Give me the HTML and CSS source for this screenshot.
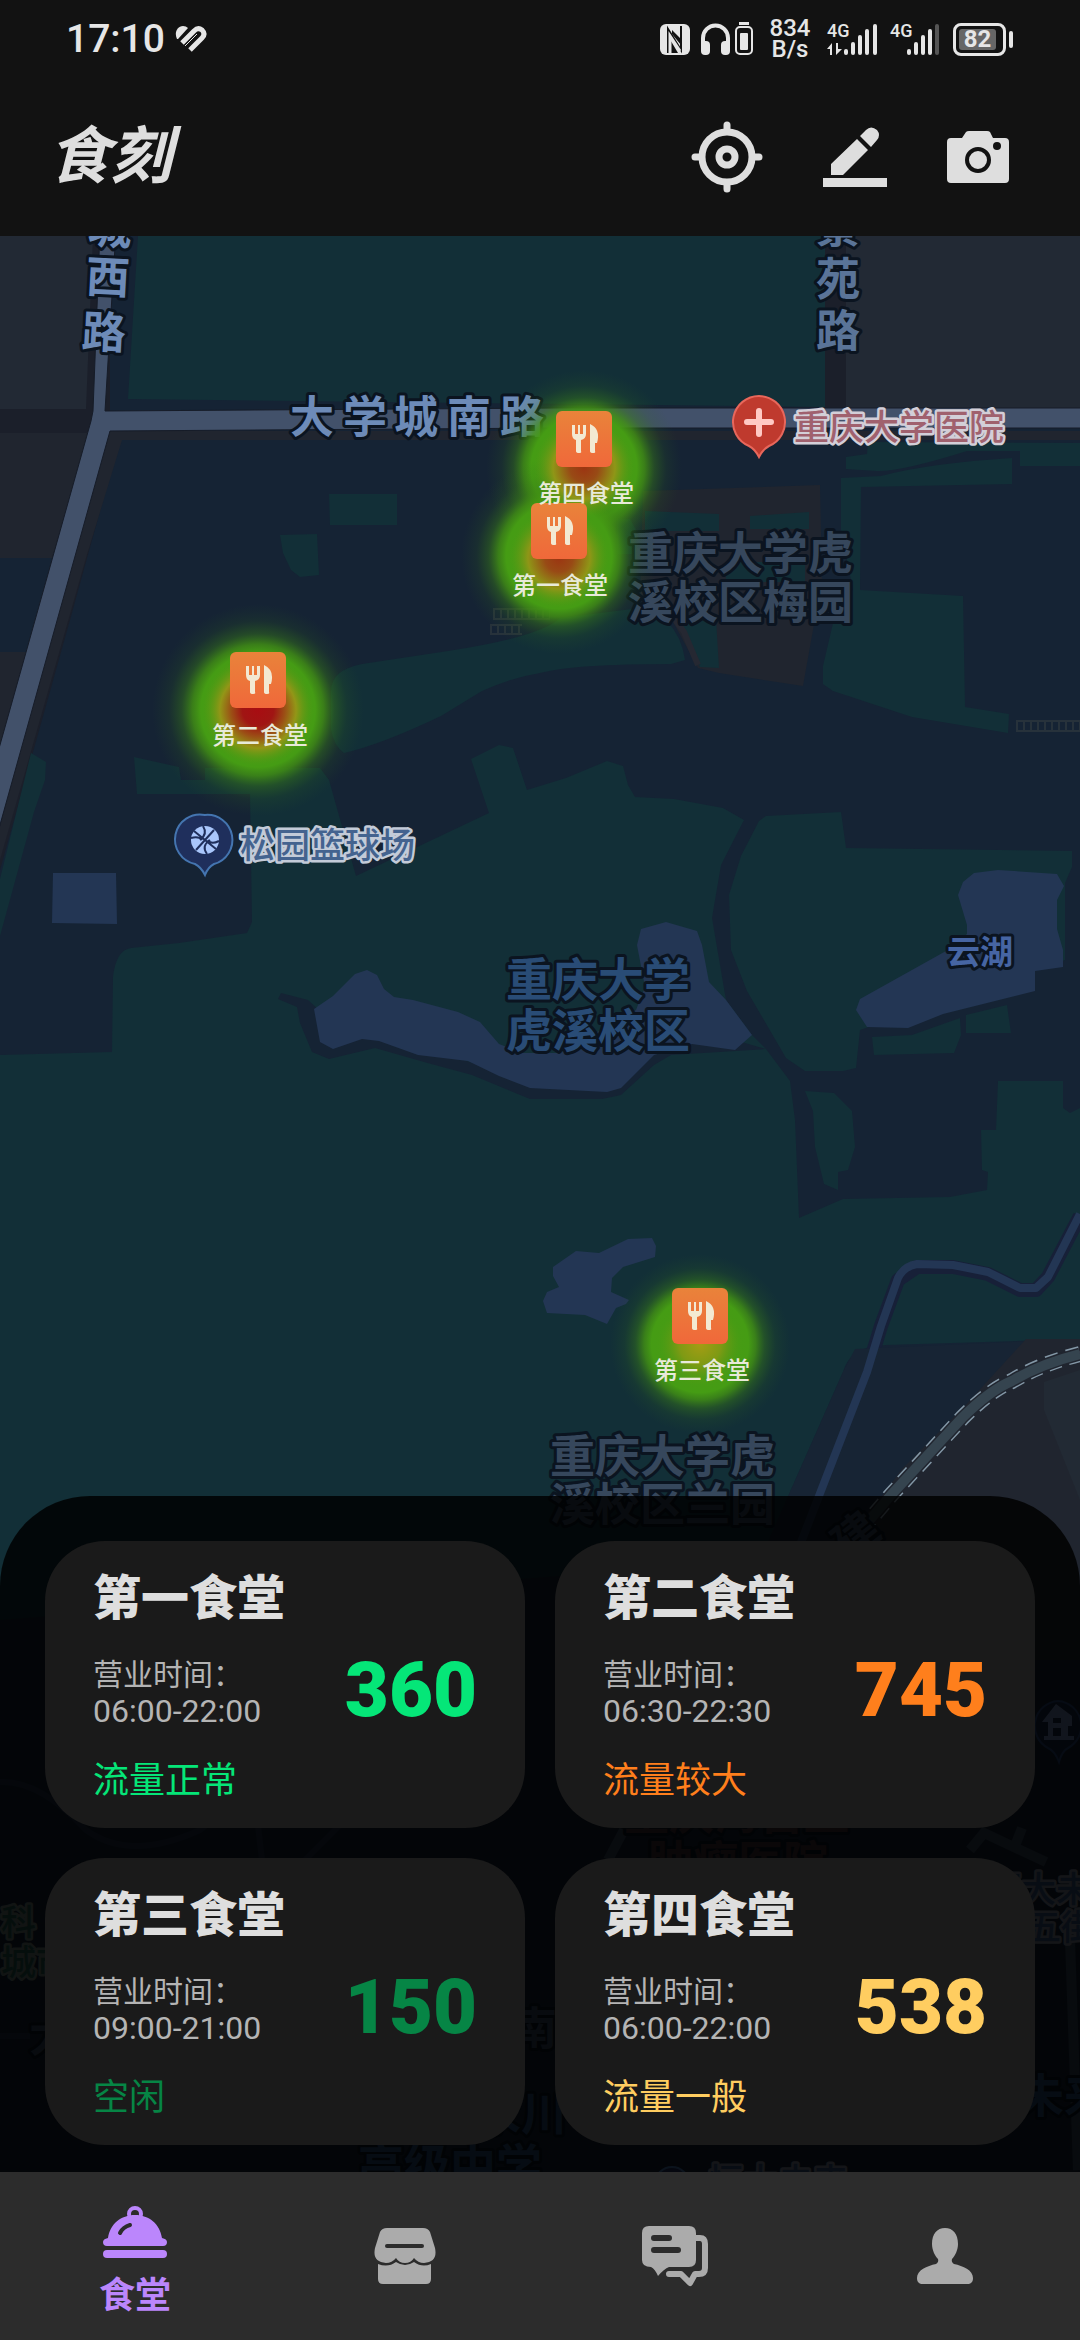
FILE: index.html
```html
<!DOCTYPE html>
<html lang="zh-CN">
<head>
<meta charset="utf-8">
<meta name="viewport" content="width=device-width, initial-scale=1">
<title>食刻</title>
<link rel="stylesheet" href="styles.css">
</head>
<body>
<div class="app">
  <div class="status">
    <div class="status-left">
      <span class="clock">17:10</span>
      <svg class="heart" width="32" height="27" viewBox="0 0 32 27" fill="none" aria-hidden="true">
        <path d="M2 13C-1 7 2 0 8 0Q11 0 13 2L3 13Z" fill="#e6e6e6"/>
        <path d="M7 17L19 5Q23 1 27 4Q31 8 27 12L15 24" stroke="#e6e6e6" stroke-width="5"/>
        <path d="M10 20L22 8" stroke="#e6e6e6" stroke-width="1"/>
      </svg>
    </div>
    <div class="status-right">
      <svg width="93" height="34" viewBox="0 0 93 34" fill="none" aria-hidden="true">
        <rect x="0" y="2" width="30" height="31" rx="6" fill="#e6e6e6"/>
        <path d="M8 31V7L21 28V4" stroke="#121212" stroke-width="2"/>
        <path d="M12 8L21 17V23L12 12ZM8 14V31L18 31" fill="#121212"/>
        <path d="M10 32V14L20 29" stroke="#e6e6e6" stroke-width="3"/>
        <path d="M43 25V16A12.500 12.500 0 0 1 68 16V25" stroke="#e6e6e6" stroke-width="4"/>
        <rect x="41" y="19" width="9" height="14" rx="4" fill="#e6e6e6"/>
        <rect x="61" y="19" width="9" height="14" rx="4" fill="#e6e6e6"/>
        <rect x="79" y="0" width="10" height="3" fill="#e6e6e6"/>
        <rect x="76" y="5" width="16" height="27" rx="4" stroke="#e6e6e6" stroke-width="2"/>
        <rect x="80" y="11" width="8" height="17" rx="1" fill="#e6e6e6"/>
      </svg>
      <div class="speed"><span>834</span><span>B/s</span></div>
      <div class="signal">
        <span class="net">4G</span>
        <svg width="51" height="34" viewBox="0 0 51 34" fill="#e6e6e6" aria-hidden="true">
          <path d="M0 27L5 21V33H3V27ZM9 21V33L15 27H11V21Z"/>
          <rect x="17" y="27" width="4" height="6" rx="2"/><rect x="24" y="20" width="4" height="13" rx="2"/><rect x="31" y="13" width="4" height="20" rx="2"/><rect x="38" y="7" width="4" height="26" rx="2"/><rect x="46" y="2" width="4" height="31" rx="2"/>
        </svg>
      </div>
      <div class="signal">
        <span class="net">4G</span>
        <svg width="51" height="34" viewBox="0 0 51 34" fill="#e6e6e6" aria-hidden="true">
          <rect x="17" y="27" width="4" height="6" rx="2"/><rect x="24" y="20" width="4" height="13" rx="2"/><rect x="31" y="13" width="4" height="20" rx="2"/><rect x="38" y="7" width="4" height="26" rx="2"/><rect x="45" y="2" width="4" height="31" rx="2" fill="#555"/>
        </svg>
      </div>
      <div class="battery"><span>82</span></div>
    </div>
  </div>

  <header class="topbar">
    <h1 class="brand">食刻</h1>
    <div class="tools">
      <button type="button" aria-label="定位">
        <svg width="72" height="72" viewBox="0 0 72 72" fill="none" stroke="#dedede" stroke-width="7">
          <circle cx="36" cy="36" r="25"/><circle cx="36" cy="36" r="8"/>
          <path d="M36 4V10M36 62V68M4 36H10M62 36H68" stroke-linecap="round"/>
        </svg>
      </button>
      <button type="button" aria-label="编辑">
        <svg width="64" height="60" viewBox="0 0 64 60" fill="#dedede">
          <path d="M0 51H64V60H0ZM8 48V37L34 12L45 23L20 48ZM37 9L43 3Q48-2 54 3Q58 8 54 13L48 20Z"/>
        </svg>
      </button>
      <button type="button" aria-label="拍照">
        <svg width="62" height="54" viewBox="0 0 62 54" fill="#dedede">
          <path d="M4 8H15L19 2Q20 1 22 1H40Q42 1 43 2L46 8H58Q62 8 62 12V49Q62 53 58 53H4Q0 53 0 49V12Q0 8 4 8Z"/>
          <circle cx="31" cy="30" r="11" stroke="#121212" stroke-width="4"/><circle cx="50" cy="16" r="4" fill="#121212"/>
        </svg>
      </button>
    </div>
  </header>

  <main class="stage">
    <svg class="map" viewBox="0 236 1080 1936" preserveAspectRatio="xMidYMin slice" role="img" aria-label="校园食堂地图">
      <defs>
        <radialGradient id="glow"><stop offset="0" stop-color="#4b9b14"/><stop offset=".54" stop-color="#459c14"/><stop offset=".62" stop-color="#429213" stop-opacity=".82"/><stop offset=".72" stop-color="#3a8016" stop-opacity=".42"/><stop offset=".84" stop-color="#347318" stop-opacity=".14"/><stop offset="1" stop-color="#2c6020" stop-opacity="0"/></radialGradient>
        <radialGradient id="core-high"><stop offset="0" stop-color="#a80d12"/><stop offset=".28" stop-color="#a01513"/><stop offset=".48" stop-color="#9b5015"/><stop offset=".68" stop-color="#939617"/><stop offset="1" stop-color="#4b9b14" stop-opacity="0"/></radialGradient>
        <radialGradient id="core-mid"><stop offset="0" stop-color="#9c3512"/><stop offset=".28" stop-color="#984a15"/><stop offset=".62" stop-color="#8f9617"/><stop offset="1" stop-color="#4b9b14" stop-opacity="0"/></radialGradient>
        <radialGradient id="core-low"><stop offset="0" stop-color="#a59c14"/><stop offset=".5" stop-color="#7e9a14"/><stop offset="1" stop-color="#4b9b14" stop-opacity="0"/></radialGradient>
        <linearGradient id="pin" x2="0" y2="1"><stop offset="0" stop-color="#e9833a"/><stop offset="1" stop-color="#f0683a"/></linearGradient>
        <g id="canteen">
          <rect x="-28" y="0" width="56" height="56" rx="6"/>
          <path d="M-12 14V23Q-12 28-8 29V40Q-8 42-5 42T-3 40V29Q2 28 2 23V14H-1V23H-4V14H-6V23H-9V14ZM6 13V40Q6 42 9 42T11 40V32H13Q17 18 6 13Z" fill="#f3e9d2"/>
        </g>
      </defs>

      <rect y="236" width="1080" height="1936" fill="#152334"/>
      <!-- city blocks -->
      <path fill="#1b1f2a" d="M0 236H110V411L85 440H0ZM825 236H846V408H825ZM0 431H122L70 620L0 870V760L60 558H0Z"/>
      <path fill="#222934" d="M0 236H93L86 409H0ZM846 236H1080V408H846Z"/>
      <path fill="#20252f" d="M0 433H90L52 558H0ZM0 652H28L0 752ZM104 431H1080V440H122L86 558L20 790L0 860V826ZM643 491L820 485L822 580L813 630L803 686L719 673L698 668L672 620L640 600Z"/>
      <!-- greens -->
      <g fill="#122f37">
        <path d="M138 236H825V407L128 399ZM329 494H397V525H330ZM280 535L317 534L319 575L300 577L291 570L283 553Z"/>
        <path d="M560 618Q540 637 448 651L362 664Q331 670 331 691V730Q334 746 344 753Q380 745 441 716L482 691Q510 678 540 673Q574 664 671 664L685 660Q682 637 667 621L640 608Z"/>
        <path d="M678 623L716 619L719 668L700 667L690 641ZM645 511L719 514V531H645ZM750 516L809 512V529H750ZM726 562H805V582H726ZM617 519H630L636 530V554H617Z"/>
        <path d="M846 457L867 454L868 442L1080 443V466H1020V451H967Q900 472 877 471L846 469Z"/>
        <path d="M841 478L881 476Q930 463 1012 458V484L861 487L860 590L963 596L965 707L1009 714L1008 733L912 717L833 691L823 684V666L834 619L838 598L853 590L841 530Z"/>
        <path d="M31 753L46 762L45 780L34 812L0 936V879Z"/>
        <path d="M0 1055L112 1052L113 977Q116 950 131 948L179 943L247 933L252 922L250 794H137L134 757L179 767L181 780H205V768H320L329 780L356 876L489 813L471 759L499 745L513 748L527 790L566 778L607 761L623 766L628 785L635 797L674 799L723 808L744 820L721 865L712 918L726 1000L752 1035L766 1049L790 1081L795 1120L799 1218L843 1199L950 1197L987 1190L988 1172L982 1170L981 1130H996L998 1081H1063V1108L1070 1113L1080 1108V1339L886 1345Q850 1346 843 1372L760 1560L0 1620Z"/>
        <path d="M766 816L841 812L846 848L1072 851V867L1065 883V960L860 1030L856 1068L843 1071H805L786 1058L747 991L731 950L729 895L741 856L759 821Z"/>
        <path d="M872 1037L912 1035L960 1018L961 1035L954 1053L874 1055ZM966 1015L1007 1005L1011 1033H966ZM805 1091L834 1093L852 1111L855 1147L848 1170L838 1172V1190L824 1184L815 1147L813 1111Z"/>
      </g>
      <path fill="none" stroke="#252832" stroke-width="6" d="M668 610L684 632L698 665"/>
      <path fill="none" stroke="#27323b" stroke-width="2" d="M493 609H550M493 619H550M490 625H522M490 634H522M1016 721H1080M1016 731H1080"/>
      <path fill="none" stroke="#27323b" stroke-width="10" stroke-dasharray="2 5" d="M493 614H550M490 630H523M1016 726H1080"/>
      <!-- shore and water -->
      <path fill="#152334" d="M281 993L308 1000L330 1020L530 1080L640 1030L700 1030L766 1049L671 1055L654 1065L621 1095L602 1099H530L472 1075L424 1062L375 1048L329 1059L312 1052L300 1023L297 1007L278 999Z"/>
      <path fill="none" stroke="#172038" stroke-width="14" stroke-linejoin="round" d="M1080 1216L1048 1277L1036 1290H1020L988 1274L953 1267H917L898 1280L881 1326L867 1372L821 1500"/>
      <path fill="#172434" d="M855 1349L1080 1339V1700H740L760 1560L843 1372Z"/>
      <g fill="#233654">
        <path d="M53 873H116L117 924L52 923Z"/>
        <path d="M314 1009L333 996L355 974L367 970L377 975L384 989L394 997L413 1000L458 1012L480 1022L499 1044L523 1053H560L636 1010L645 987L637 945L641 929L666 922L697 931L702 945L709 982L726 1000L752 1035L735 1050L692 1044L654 1055L621 1088L607 1092L530 1088L499 1076L468 1061L418 1055L379 1041L362 1039L333 1049L320 1042Z"/>
        <path d="M958 895L963 882L974 873L998 870L1057 874L1064 886L1057 900V929L1063 950V967L1035 971V991L943 1014L908 1028L867 1027L856 1010L860 999L946 951L967 934V925Z"/>
        <path d="M553 1267L576 1251L599 1253L628 1239L652 1238L656 1246L655 1257L623 1267L612 1278L611 1292L629 1300L626 1304L616 1308L607 1324L585 1315L547 1313L543 1301L547 1292L559 1287L553 1276Z"/>
      </g>
      <path fill="none" stroke="#233654" stroke-width="8" stroke-linejoin="round" d="M1080 1214L1048 1277L1036 1288H1020L988 1272L953 1265L917 1264Q904 1266 898 1278L881 1326L867 1372L800 1545"/>
      <!-- railway -->
      <path fill="#20252f" d="M1026 1339H1080V1660H760L902 1469L962 1409Z"/>
      <path fill="#222a34" d="M1044 1382L1080 1370V1500L1044 1410Z"/>
      <g fill="none">
        <path stroke="#8397a6" stroke-width="16" stroke-dasharray="13 8" d="M1080 1354Q1040 1364 1012 1381Q990 1390 962 1418L891 1495L810 1590"/>
        <path stroke="#20252f" stroke-width="13" d="M1080 1354Q1040 1364 1012 1381Q990 1390 962 1418L891 1495L810 1590"/>
        <path stroke="#35444f" stroke-width="10" d="M1080 1354Q1040 1364 1012 1381Q990 1390 962 1418L891 1495L810 1590"/>
        <path stroke="#33445a" stroke-width="10" d="M624 1830L608 1860M970 1850L984 1833L1046 1862M1022 1828L1015 1846M1070 1940L1078 2170"/>
        <path stroke="#202f48" stroke-width="6" d="M0 1782Q40 1780 86 1830Q130 1862 200 1830L240 1800M255 1800L262 1860M340 1825L300 1865M0 2036H30"/>
      </g>
      <!-- roads -->
      <path fill="#42516a" stroke="#161c28" stroke-width="1" d="M100 230H116L105 411L560 408H1082V428H560L110 431L-2 832V752L91 421L93 411Z"/>

      <!-- labels -->
      <g class="label road">
        <text x="87" y="243" transform="rotate(3 87 243)">城</text>
        <text x="85" y="292" transform="rotate(3 85 292)">西</text>
        <text x="81" y="347" transform="rotate(3 81 347)">路</text>
        <text x="290 343 394 447 500" y="433">大学城南路</text>
      </g>
      <g class="label road-minor">
        <text x="816" y="243">景</text><text x="816" y="295">苑</text><text x="816" y="347">路</text>
      </g>
      <g class="label area"><text x="628" y="570">重庆大学虎</text><text x="628" y="619">溪校区梅园</text><text x="550" y="1473">重庆大学虎</text><text x="550" y="1521">溪校区兰园</text></g>
      <g class="label campus"><text x="506" y="996">重庆大学</text><text x="506" y="1047">虎溪校区</text></g>
      <g class="label lake"><text x="947" y="964">云湖</text></g>
      <g class="label area"><text x="848" y="1562" transform="rotate(-38 848 1562)">建</text><text x="29" y="2052">大</text><text x="512" y="2045">南</text></g>
      <g class="label hospital"><text x="624" y="1830">重庆海吉亚</text><text x="648" y="1879">肿瘤医院</text></g>
      <g class="label campus"><text x="475" y="2130">永川</text><text x="358" y="2182">高级中学</text><text x="1018" y="2112">未来</text></g>
      <g class="label poi park"><text x="1" y="1935">科·</text><text x="1" y="1975">城市</text></g>
      <g class="label poi faded"><text x="986" y="1902">恒大未</text><text x="1026" y="1940">五街</text><text x="708" y="2194">恒大未来</text></g>
      <g class="label poi sport"><text x="240" y="858">松园篮球场</text></g>
      <g class="label poi clinic"><text x="794" y="440">重庆大学医院</text></g>

      <!-- place pins -->
      <path d="M759 396A26 26 0 0 1 769 446Q763 449 759 457Q755 449 749 446A26 26 0 0 1 759 396Z" fill="#bf3a2e" stroke="#e8675b" stroke-width="2"/>
      <path d="M759 411V434M747 422H771" fill="none" stroke="#ffc9c4" stroke-width="6" stroke-linecap="round"/>
      <path d="M205 815A25 25 0 0 1 214 864Q208 867 205 875Q201 867 195 864A25 25 0 0 1 205 815Z" fill="#1f2f5c" stroke="#4475b0" stroke-width="2"/>
      <circle cx="205" cy="840" r="14" fill="#a9c6fb"/>
      <path d="M194 831L216 849M196 850L214 830M203 826Q208 834 200 840M207 854Q201 846 210 840M191 838Q199 836 202 840M219 841Q211 845 208 840" fill="none" stroke="#1f2f5c" stroke-width="2"/>
      <path d="M1058 1701A25 25 0 0 1 1068 1748Q1062 1751 1059 1762Q1055 1751 1048 1748A25 25 0 0 1 1058 1701Z" fill="#182647" stroke="#29487a" stroke-width="2"/>
      <path d="M1042 1722L1056 1704L1072 1716V1726H1068V1736H1074V1740H1044V1736H1048V1722ZM1053 1718V1723H1061V1718ZM1053 1728V1736H1061V1728Z" fill="#6d86b4"/>
      <circle cx="672" cy="2184" r="17" fill="#1f2f5c" stroke="#4475b0" stroke-width="2"/>

      <!-- crowd heat -->
      <circle cx="258" cy="710" r="106" fill="url(#glow)"/>
      <circle cx="584" cy="468" r="98" fill="url(#glow)"/>
      <circle cx="559" cy="556" r="98" fill="url(#glow)"/>
      <circle cx="700" cy="1344" r="90" fill="url(#glow)"/>
      <circle cx="258" cy="710" r="56" fill="url(#core-high)"/>
      <circle cx="584" cy="468" r="50" fill="url(#core-mid)"/>
      <circle cx="559" cy="558" r="50" fill="url(#core-mid)"/>
      <circle cx="700" cy="1344" r="42" fill="url(#core-low)"/>

      <!-- canteens -->
      <g class="canteen">
        <use href="#canteen" x="258" y="652" fill="url(#pin)"/><text x="260" y="744">第二食堂</text>
        <use href="#canteen" x="559" y="503" fill="url(#pin)"/><text x="560" y="594">第一食堂</text>
        <use href="#canteen" x="584" y="411" fill="url(#pin)"/><text x="586" y="502">第四食堂</text>
        <use href="#canteen" x="700" y="1288" fill="url(#pin)"/><text x="702" y="1379">第三食堂</text>
      </g>
    </svg>

    <section class="panel" aria-label="食堂客流">
      <article class="card normal">
        <h2>第一食堂</h2>
        <div class="row"><p class="hours"><span>营业时间：</span><time>06:00-22:00</time></p><strong class="count">360</strong></div>
        <p class="flow">流量正常</p>
      </article>
      <article class="card busy">
        <h2>第二食堂</h2>
        <div class="row"><p class="hours"><span>营业时间：</span><time>06:30-22:30</time></p><strong class="count">745</strong></div>
        <p class="flow">流量较大</p>
      </article>
      <article class="card idle">
        <h2>第三食堂</h2>
        <div class="row"><p class="hours"><span>营业时间：</span><time>09:00-21:00</time></p><strong class="count">150</strong></div>
        <p class="flow">空闲</p>
      </article>
      <article class="card medium">
        <h2>第四食堂</h2>
        <div class="row"><p class="hours"><span>营业时间：</span><time>06:00-22:00</time></p><strong class="count">538</strong></div>
        <p class="flow">流量一般</p>
      </article>
    </section>
  </main>

  <nav class="tabs">
    <a href="#canteens" class="tab active" aria-current="page">
      <svg width="64" height="52" viewBox="0 0 64 52" fill="currentColor" aria-hidden="true">
        <circle cx="32" cy="8" r="6" fill="none" stroke="currentColor" stroke-width="4"/>
        <path d="M5 32C7 18 18 9 32 9S57 18 59 32Q64 33 64 36Q64 40 60 40H4Q0 40 0 36Q0 33 5 32Z"/>
        <path d="M17 27Q20 21 27 19" fill="none" stroke="#2c2c2c" stroke-width="4" stroke-linecap="round"/>
        <rect y="44" width="64" height="8" rx="4"/>
      </svg>
      <span>食堂</span>
    </a>
    <a href="#shops" class="tab" aria-label="商店">
      <svg width="62" height="56" viewBox="0 0 62 56" fill="currentColor">
        <path d="M13 0H49Q54 0 56 4L61 20Q64 34 50 35Q44 35 40 30Q37 35 31 35Q25 35 22 30Q18 35 12 35Q-2 34 1 20L6 4Q8 0 13 0Z"/>
        <path d="M13 18H48" stroke="#2c2c2c" stroke-width="4" stroke-linecap="round"/>
        <path d="M4 36Q14 40 22 34Q31 40 40 34Q48 40 57 36V51Q57 56 52 56H9Q4 56 4 51Z"/>
      </svg>
    </a>
    <a href="#messages" class="tab" aria-label="消息">
      <svg width="66" height="61" viewBox="0 0 66 61" fill="none">
        <path d="M7 0H47Q54 0 54 7V34Q54 41 47 41H27Q22 43 16 50Q13 43 9 41Q0 41 0 34V7Q0 0 7 0Z" fill="currentColor"/>
        <path d="M12 12H27M12 24H36" stroke="#2c2c2c" stroke-width="6" stroke-linecap="round"/>
        <path d="M54 12H58Q63 12 63 18V42Q63 48 57 48H53L48 57L39 48H27" stroke="currentColor" stroke-width="6" stroke-linecap="round" stroke-linejoin="round"/>
      </svg>
    </a>
    <a href="#me" class="tab" aria-label="我的">
      <svg width="56" height="56" viewBox="0 0 56 56" fill="currentColor">
        <path d="M28 0C36 0 41 6 41 16C41 22 38 28 35 31Q34 34 37 36C46 38 56 42 56 50C56 54 54 56 50 56H6C2 56 0 54 0 50C0 42 10 38 19 36Q22 34 21 31C18 28 15 22 15 16C15 6 20 0 28 0Z"/>
      </svg>
    </a>
  </nav>
</div>
</body>
</html>
```

FILE: styles.css
```css
* { box-sizing: border-box; margin: 0; padding: 0; }

body {
  background: #121212;
  color: #dedede;
  font-family: Roboto, "Noto Sans CJK SC", sans-serif;
}

.app { display: flex; flex-direction: column; min-height: 100vh; }
svg { display: block; }

/* status bar */
.status {
  display: flex;
  justify-content: space-between;
  align-items: center;
  height: 78px;
  padding: 0 74px 0 66px;
  color: #e6e6e6;
}
.status-left, .status-right { display: flex; align-items: center; }
.status-left { gap: 10px; }
.clock { font-size: 39px; line-height: 48px; font-weight: 500; }
.status-right { gap: 12px; }
.speed {
  display: flex;
  flex-direction: column;
  align-items: center;
  width: 50px;
  font-size: 24px;
  line-height: 21px;
  font-weight: 500;
}
.signal { position: relative; }
.net { position: absolute; top: 0; left: 0; font-size: 18px; line-height: 18px; font-weight: 500; }
.battery {
  position: relative;
  width: 53px;
  height: 33px;
  padding: 3px;
  border: 3px solid #e6e6e6;
  border-radius: 8px;
}
.battery::after {
  content: "";
  position: absolute;
  top: 5px;
  right: -10px;
  width: 4px;
  height: 17px;
  border-radius: 2px;
  background: #e6e6e6;
}
.battery span {
  display: block;
  width: 37px;
  height: 21px;
  border-radius: 3px;
  background: #666;
  font-size: 24px;
  line-height: 21px;
  font-weight: 700;
  text-align: center;
}

/* title bar */
.topbar {
  display: flex;
  justify-content: space-between;
  align-items: center;
  height: 158px;
  padding: 0 71px 0 48px;
}
.brand {
  font-size: 62px;
  line-height: 158px;
  font-weight: 700;
  font-style: italic;
}
.tools { display: flex; align-items: center; gap: 60px; }
.tools button { border: 0; background: none; cursor: pointer; }

/* map */
.stage {
  position: relative;
  display: flex;
  flex: 1;
  flex-direction: column;
  justify-content: flex-end;
  overflow: hidden;
  background: #152334;
}
.map { position: absolute; inset: 0; width: 100%; height: 100%; }
.label {
  font-family: "Noto Sans CJK SC", sans-serif;
  font-weight: 500;
  paint-order: stroke;
  stroke: #0b1420;
  stroke-width: 6px;
  stroke-linejoin: round;
}
.road { font-size: 44px; font-weight: 700; fill: #6d8bb8; }
.road-minor { font-size: 44px; font-weight: 700; fill: #5a7498; }
.area { font-size: 45px; font-weight: 700; fill: #36475c; }
.campus { font-size: 46px; font-weight: 700; fill: #294c76; }
.lake { font-size: 33px; font-weight: 700; fill: #4665a3; }
.hospital { font-size: 45px; font-weight: 700; fill: #3f2c35; }
.poi { font-size: 35px; stroke: #c3cbd8; stroke-width: 5px; }
.park { fill: #24594f; stroke: #6c7c78; }
.sport { fill: #44638f; }
.faded { fill: #35507a; stroke: #7c8594; }
.clinic { fill: #a0616e; stroke: #d3cfd8; }
.canteen text {
  font-family: "Noto Sans CJK SC", sans-serif;
  font-size: 24px;
  font-weight: 500;
  text-anchor: middle;
  fill: #e8ead9;
}

/* canteen cards */
.panel {
  position: relative;
  display: grid;
  grid-template-columns: 1fr 1fr;
  gap: 30px;
  padding: 45px 45px 27px;
  border-radius: 90px 90px 0 0;
  background: rgba(0, 0, 0, 0.84);
}
.card {
  display: flex;
  flex-direction: column;
  gap: 34px;
  padding: 34px 48px 29px;
  border-radius: 60px;
  background: #1a1a1a;
}
.card h2 { font-size: 48px; line-height: 48px; font-weight: 900; }
.row { display: flex; justify-content: space-between; align-items: flex-start; }
.hours { display: flex; flex-direction: column; line-height: 36px; color: #b4b4b4; }
.hours span { font-size: 30px; }
.hours time { font-size: 32px; }
.count { font-size: 76px; line-height: 66px; font-weight: 900; }
.flow { font-size: 36px; line-height: 36px; }
.normal .count, .normal .flow { color: #05e678; }
.busy .count, .busy .flow { color: #ff7f1c; }
.idle .count, .idle .flow { color: #068545; }
.medium .count, .medium .flow { color: #ffcd60; }

/* bottom tabs */
.tabs { display: grid; grid-template-columns: repeat(4, 1fr); height: 168px; background: #2c2c2c; }
.tab {
  display: flex;
  flex-direction: column;
  align-items: center;
  justify-content: center;
  gap: 20px;
  color: #ababab;
  text-decoration: none;
}
.active { padding-top: 8px; color: #bb86fc; }
.tab span { font-size: 36px; line-height: 36px; font-weight: 700; }
```
